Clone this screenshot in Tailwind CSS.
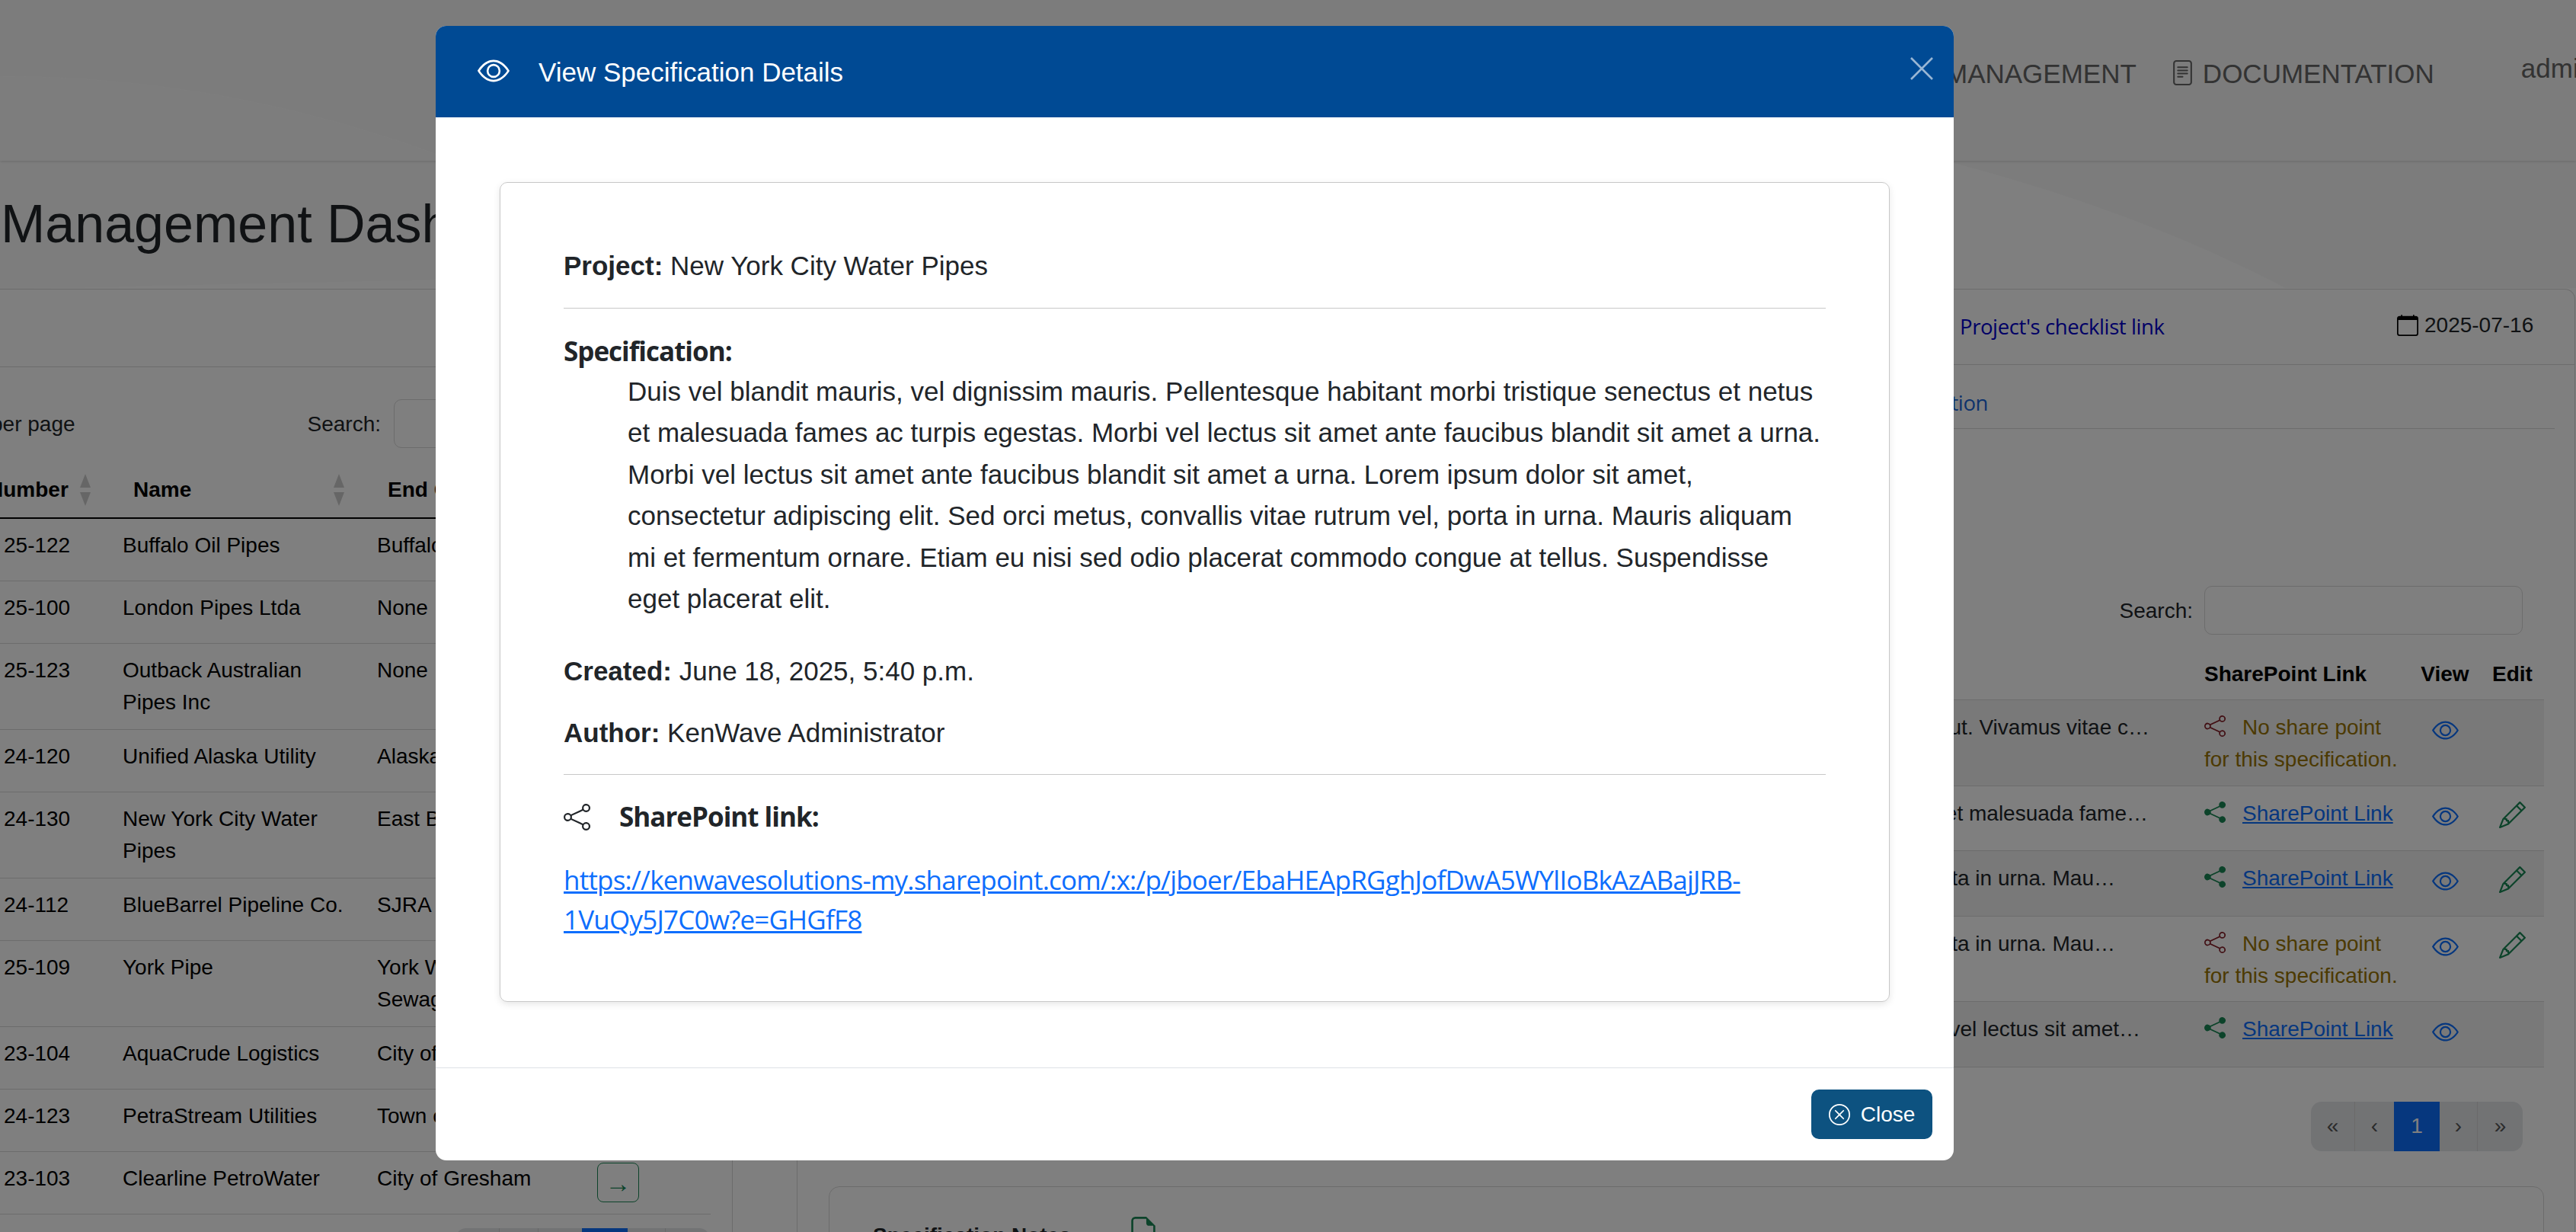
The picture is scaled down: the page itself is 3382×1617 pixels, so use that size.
<!DOCTYPE html>
<html lang="en">
<head>
    <meta charset="UTF-8">
    <title>View Specification Details</title>
    <script src="https://cdn.jsdelivr.net/npm/@tailwindcss/browser@4"></script>
</head>
<body class="relative w-[3382px] h-[1617px] overflow-hidden bg-white font-['Liberation_Sans',sans-serif] text-[28px] leading-[42px] text-black">
    <!-- icons -->
    <svg class="hidden">
        <symbol id="eye" viewBox="0 0 16 16"><path d="M16 8s-3-5.5-8-5.5S0 8 0 8s3 5.5 8 5.5S16 8 16 8zM1.173 8a13.133 13.133 0 0 1 1.66-2.043C4.12 4.668 5.88 3.5 8 3.5c2.12 0 3.879 1.168 5.168 2.457A13.133 13.133 0 0 1 14.828 8c-.058.087-.122.183-.195.288-.335.48-.83 1.12-1.465 1.755C11.879 11.332 10.119 12.5 8 12.5c-2.12 0-3.879-1.168-5.168-2.457A13.134 13.134 0 0 1 1.172 8z"/><path d="M8 5.5a2.5 2.5 0 1 0 0 5 2.5 2.5 0 0 0 0-5zM4.5 8a3.5 3.5 0 1 1 7 0 3.5 3.5 0 0 1-7 0z"/></symbol>
        <symbol id="share" viewBox="0 0 16 16"><path d="M13.5 1a1.5 1.5 0 1 0 0 3 1.5 1.5 0 0 0 0-3zM11 2.5a2.5 2.5 0 1 1 .603 1.628l-6.718 3.12a2.499 2.499 0 0 1 0 1.504l6.718 3.12a2.5 2.5 0 1 1-.488.876l-6.718-3.12a2.5 2.5 0 1 1 0-3.256l6.718-3.12A2.5 2.5 0 0 1 11 2.5zm-8.5 4a1.5 1.5 0 1 0 0 3 1.5 1.5 0 0 0 0-3zm11 5.5a1.5 1.5 0 1 0 0 3 1.5 1.5 0 0 0 0-3z"/></symbol>
        <symbol id="share-fill" viewBox="0 0 16 16"><path d="M11 2.5a2.5 2.5 0 1 1 .603 1.628l-6.718 3.12a2.499 2.499 0 0 1 0 1.504l6.718 3.12a2.5 2.5 0 1 1-.488.876l-6.718-3.12a2.5 2.5 0 1 1 0-3.256l6.718-3.12A2.5 2.5 0 0 1 11 2.5z"/></symbol>
        <symbol id="pencil" viewBox="0 0 16 16"><path d="M12.146.146a.5.5 0 0 1 .708 0l3 3a.5.5 0 0 1 0 .708l-10 10a.5.5 0 0 1-.168.11l-5 2a.5.5 0 0 1-.65-.65l2-5a.5.5 0 0 1 .11-.168l10-10zM11.207 2.5 13.5 4.793 14.793 3.5 12.5 1.207 11.207 2.5zm1.586 3L10.5 3.207 4 9.707V10h.5a.5.5 0 0 1 .5.5v.5h.5a.5.5 0 0 1 .5.5v.5h.293l6.5-6.5zm-9.761 5.175-.106.106-1.528 3.821 3.821-1.528.106-.106A.5.5 0 0 1 5 12.5V12h-.5a.5.5 0 0 1-.5-.5V11h-.5a.5.5 0 0 1-.468-.325z"/></symbol>
        <symbol id="sort" viewBox="0 0 14 42"><polygon points="7,0 14,18 0,18"/><polygon points="0,24 14,24 7,42"/></symbol>
    </svg>

    <!-- page background swooshes -->
    <svg class="absolute left-0 top-0" width="3382" height="400" viewBox="0 0 3382 400">
        <path d="M0 0H3382V378H3000C2850 300 2700 250 2565 214C1800 120 1200 100 900 360C600 180 300 100 0 100Z" fill="#000" fill-opacity="0.025"/>
        <path d="M0 100C300 100 600 180 900 360L0 380Z" fill="#000" fill-opacity="0.015"/>
    </svg>

    <div class="relative">
        <nav class="flex items-start h-[211px] pl-[2554px] pt-[76px] text-[35px] text-[#666] shadow-[0_1px_3px_rgba(0,0,0,0.15)]">
            <span class="shrink-0">MANAGEMENT</span>
            <svg class="shrink-0 ml-[44px] mt-[3px] w-[33px] h-[33px] fill-current" viewBox="0 0 16 16"><path d="M5 4a.5.5 0 0 0 0 1h6a.5.5 0 0 0 0-1H5zm-.5 2.5A.5.5 0 0 1 5 6h6a.5.5 0 0 1 0 1H5a.5.5 0 0 1-.5-.5zM5 8a.5.5 0 0 0 0 1h6a.5.5 0 0 0 0-1H5zm0 2a.5.5 0 0 0 0 1h3a.5.5 0 0 0 0-1H5z"/><path d="M2 2a2 2 0 0 1 2-2h8a2 2 0 0 1 2 2v12a2 2 0 0 1-2 2H4a2 2 0 0 1-2-2V2zm10-1H4a1 1 0 0 0-1 1v12a1 1 0 0 0 1 1h8a1 1 0 0 0 1-1V2a1 1 0 0 0-1-1z"/></svg>
            <span class="shrink-0 ml-[10px]">DOCUMENTATION</span>
            <span class="shrink-0 ml-[114px] -mt-[7px]">admin</span>
        </nav>

        <h1 class="flex items-center h-[168px] pb-[2px] pl-[1px] text-[70px] whitespace-nowrap text-[#212529]">Management Dashboard</h1>

        <div class="flex items-start">
            <!-- projects list -->
            <section class="w-[962px] h-[1300px] border-t border-r border-[#d8d8d8]">
                <div class="h-[102px] border-b border-[#d8d8d8]"></div>
                <div class="flex items-center mt-[42px] h-[64px] pt-[2px]">
                    <span class="-ml-[12px] text-[#212529]">per page</span>
                    <span class="ml-[305px] text-[#212529]">Search:</span>
                    <input class="ml-[17px] -mt-[2px] w-[300px] h-[64px] border border-[#d8d8d8] rounded-[10px]">
                </div>
                <table class="table-fixed w-[933px] mt-[18px] border-collapse">
                    <colgroup><col class="w-[147px]"><col class="w-[334px]"><col class="w-[289px]"><col class="w-[163px]"></colgroup>
                    <thead>
                        <tr class="h-[74px] border-b-2 border-black text-left align-middle">
                            <th class="font-bold"><div class="flex items-center -ml-[16px]">Number<svg class="ml-[15px] w-[14px] h-[42px] fill-black/20"><use href="#sort"/></svg></div></th>
                            <th class="font-bold pl-[28px]"><div class="flex items-center justify-between pr-[29px]">Name<svg class="w-[14px] h-[42px] fill-black/20"><use href="#sort"/></svg></div></th>
                            <th class="font-bold pl-[28px] whitespace-nowrap">End Customer</th>
                            <th></th>
                        </tr>
                    </thead>
                    <tbody class="[&_td]:align-top [&_td]:pt-[14px] [&_td]:pb-[14px] [&_td]:px-[14px] [&_tr]:h-[82px] [&_tr]:border-b [&_tr]:border-[#d8d8d8] [&_td:first-child]:pl-[5px]">
                        <tr><td>25-122</td><td>Buffalo Oil Pipes</td><td>Buffalo Water</td><td></td></tr>
                        <tr><td>25-100</td><td>London Pipes Ltda</td><td>None</td><td></td></tr>
                        <tr><td>25-123</td><td>Outback Australian Pipes Inc</td><td>None</td><td></td></tr>
                        <tr><td>24-120</td><td>Unified Alaska Utility</td><td>Alaska Utility</td><td></td></tr>
                        <tr><td>24-130</td><td>New York City Water Pipes</td><td>East Brunswick, NY</td><td></td></tr>
                        <tr><td>24-112</td><td>BlueBarrel Pipeline Co.</td><td>SJRA Water</td><td></td></tr>
                        <tr><td>25-109</td><td>York Pipe</td><td>York Water and Sewage</td><td></td></tr>
                        <tr><td>23-104</td><td>AquaCrude Logistics</td><td>City of Austin</td><td></td></tr>
                        <tr><td>24-123</td><td>PetraStream Utilities</td><td>Town of Cary</td><td></td></tr>
                        <tr>
                            <td>23-103</td><td>Clearline PetroWater</td><td class="whitespace-nowrap">City of Gresham</td>
                            <td class="!pt-[14px]"><button class="w-[55px] h-[52px] border border-[#198754] rounded-[8px] text-[#198754] text-[34px] leading-[52px]">→</button></td>
                        </tr>
                    </tbody>
                </table>
                <div class="flex ml-[598px] mt-[18px] w-[334px] h-[65px] rounded-[14px] overflow-hidden bg-[#e4e6e9] text-[#555]">
                    <span class="w-[58px] border-r border-[#d0d0d0]"></span><span class="w-[51px] border-r border-[#d0d0d0]"></span><span class="w-[57px]"></span>
                    <span class="w-[60px] bg-[#0d6efd]"></span><span class="w-[50px] border-r border-[#d0d0d0]"></span><span class="w-[58px]"></span>
                </div>
            </section>

            <!-- checklist and specifications -->
            <section class="ml-[84px] w-[2335px] h-[1300px] border-t border-l border-r border-[#d8d8d8] rounded-tr-[14px]">
                <div class="flex items-center h-[99px] border-b border-[#d8d8d8] pl-[1526px]">
                    <a class="w-[267px] whitespace-nowrap font-['Open_Sans',sans-serif] text-[27.5px] text-[#0000cc] tracking-[-0.4px]">Project's checklist link</a>
                    <svg class="ml-[307px] -mt-[4px] w-[28px] h-[28px] fill-current" viewBox="0 0 16 16"><path d="M3.5 0a.5.5 0 0 1 .5.5V1h8V.5a.5.5 0 0 1 1 0V1h1a2 2 0 0 1 2 2v11a2 2 0 0 1-2 2H2a2 2 0 0 1-2-2V3a2 2 0 0 1 2-2h1V.5a.5.5 0 0 1 .5-.5zM1 4v10a1 1 0 0 0 1 1h12a1 1 0 0 0 1-1V4H1z"/></svg>
                    <span class="ml-[8px] -mt-[4px] text-[#212529]">2025-07-16</span>
                </div>
                <div class="flex items-center justify-end h-[84px] w-[2307px] border-b border-[#d8d8d8] pr-[744px] pt-[16px]">
                    <a class="font-['Open_Sans',sans-serif] text-[27.5px] text-[#1a66d8] tracking-[-0.4px]">Specification</a>
                </div>

                <div class="flex items-center justify-end h-[64px] mt-[206px] w-[2265px]">
                    <span class="mr-[15px] mt-[2px] text-[#212529]">Search:</span>
                    <input class="w-[418px] h-[64px] border border-[#d8d8d8] rounded-[10px]">
                </div>

                <table class="table-fixed w-[2252px] ml-[41px] mt-[20px] border-collapse">
                    <colgroup><col class="w-[1792px]"><col class="w-[289px]"><col class="w-[82px]"><col class="w-[89px]"></colgroup>
                    <thead>
                        <tr class="h-[65px] border-b border-[#d8d8d8] font-bold text-left">
                            <th class="text-right pr-[58px]"></th>
                            <th class="pl-[14px]">SharePoint Link</th>
                            <th class="text-center">View</th>
                            <th class="text-center pl-[6px]">Edit</th>
                        </tr>
                    </thead>
                    <tbody class="[&_td]:align-top [&_td]:pt-[15px] [&_tr]:border-b [&_tr]:border-[#d8d8d8] [&_tr:nth-child(odd)]:bg-black/5 text-[#212529]">
                        <tr class="h-[113px]">
                            <td class="text-right pr-[58px] whitespace-nowrap">sodales ut. Vivamus vitae c…</td>
                            <td class="pl-[14px] text-[#997404]"><svg class="inline-block align-[-3px] mr-[22px] w-[28px] h-[28px] fill-[#842029]"><use href="#share"/></svg>No share point<br>for this specification.</td>
                            <td class="text-center"><svg class="inline-block w-[35px] h-[35px] mt-[5px] fill-[#0d6efd]"><use href="#eye"/></svg></td>
                            <td></td>
                        </tr>
                        <tr class="h-[85px]">
                            <td class="text-right pr-[60px] whitespace-nowrap">netus et malesuada fame…</td>
                            <td class="pl-[14px]"><svg class="inline-block align-[-3px] mr-[22px] w-[28px] h-[28px] fill-[#198754]"><use href="#share-fill"/></svg><a class="text-[#0d6efd] underline">SharePoint Link</a></td>
                            <td class="text-center"><svg class="inline-block w-[35px] h-[35px] mt-[5px] fill-[#0d6efd]"><use href="#eye"/></svg></td>
                            <td class="text-center pl-[6px]"><svg class="inline-block w-[35px] h-[35px] mt-[1px] fill-[#198754]"><use href="#pencil"/></svg></td>
                        </tr>
                        <tr class="h-[86px]">
                            <td class="text-right pr-[103px] whitespace-nowrap">porta in urna. Mau…</td>
                            <td class="pl-[14px]"><svg class="inline-block align-[-3px] mr-[22px] w-[28px] h-[28px] fill-[#198754]"><use href="#share-fill"/></svg><a class="text-[#0d6efd] underline">SharePoint Link</a></td>
                            <td class="text-center"><svg class="inline-block w-[35px] h-[35px] mt-[5px] fill-[#0d6efd]"><use href="#eye"/></svg></td>
                            <td class="text-center pl-[6px]"><svg class="inline-block w-[35px] h-[35px] mt-[1px] fill-[#198754]"><use href="#pencil"/></svg></td>
                        </tr>
                        <tr class="h-[112px]">
                            <td class="text-right pr-[103px] whitespace-nowrap">porta in urna. Mau…</td>
                            <td class="pl-[14px] text-[#997404]"><svg class="inline-block align-[-3px] mr-[22px] w-[28px] h-[28px] fill-[#842029]"><use href="#share"/></svg>No share point<br>for this specification.</td>
                            <td class="text-center"><svg class="inline-block w-[35px] h-[35px] mt-[5px] fill-[#0d6efd]"><use href="#eye"/></svg></td>
                            <td class="text-center pl-[6px]"><svg class="inline-block w-[35px] h-[35px] mt-[1px] fill-[#198754]"><use href="#pencil"/></svg></td>
                        </tr>
                        <tr class="h-[86px]">
                            <td class="text-right pr-[70px] whitespace-nowrap">Morbi vel lectus sit amet…</td>
                            <td class="pl-[14px]"><svg class="inline-block align-[-3px] mr-[22px] w-[28px] h-[28px] fill-[#198754]"><use href="#share-fill"/></svg><a class="text-[#0d6efd] underline">SharePoint Link</a></td>
                            <td class="text-center"><svg class="inline-block w-[35px] h-[35px] mt-[5px] fill-[#0d6efd]"><use href="#eye"/></svg></td>
                            <td></td>
                        </tr>
                    </tbody>
                </table>

                <div class="flex items-center justify-center ml-[1987px] mt-[45px] w-[278px] h-[65px] rounded-[14px] overflow-hidden bg-[#e4e6e9] text-[#555] [&>span]:flex [&>span]:items-center [&>span]:justify-center">
                    <span class="w-[58px] h-full border-r border-[#d4d4d4]">«</span>
                    <span class="w-[51px] h-full">‹</span>
                    <span class="w-[60px] h-full bg-[#0d6efd] text-white">1</span>
                    <span class="w-[50px] h-full border-r border-[#d4d4d4]">›</span>
                    <span class="w-[59px] h-full">»</span>
                </div>

                <div class="ml-[41px] mt-[46px] w-[2252px] h-[200px] border border-[#d8d8d8] rounded-[14px] pl-[57px] pt-[39px] flex items-start">
                    <span class="mt-[4px] font-bold text-[#212529]">Specification Notes</span>
                    <svg class="ml-[78px] w-[34px] h-[42px] fill-[#198754]" viewBox="2 0 12 16"><path d="M14 4.5V14a2 2 0 0 1-2 2H4a2 2 0 0 1-2-2V2a2 2 0 0 1 2-2h5.5L14 4.5zm-3 0A1.5 1.5 0 0 1 9.5 3V1H4a1 1 0 0 0-1 1v12a1 1 0 0 0 1 1h8a1 1 0 0 0 1-1V4.5h-2z"/></svg>
                </div>
            </section>
        </div>
    </div>

    <!-- modal -->
    <div class="absolute inset-0 bg-black/50"></div>
    <div class="absolute left-[572px] top-[34px] flex flex-col w-[1993px] h-[1489px] rounded-[14px] overflow-hidden bg-white text-[#212529]">
        <header class="flex items-center shrink-0 h-[120px] pl-[55px] pr-[27px] bg-[#004a94] text-white">
            <svg class="w-[42px] h-[42px] -mt-[3px] fill-white"><use href="#eye"/></svg>
            <h5 class="ml-[38px] mt-[2px] text-[35px]">View Specification Details</h5>
            <svg class="ml-auto -mt-[8px] w-[30px] h-[30px] stroke-white/60" viewBox="0 0 30 30" stroke-width="2.6"><path d="M1 1 29 29M29 1 1 29"/></svg>
        </header>
        <div class="flex-1 pt-[85px] px-[84px]">
            <div class="h-[1076px] border border-[#c8c8c8] rounded-[10px] shadow-[0_3px_10px_rgba(0,0,0,0.1)] px-[83px] pt-[82px] text-[35px] leading-[54px]">
                <p><b class="font-bold">Project:</b> New York City Water Pipes</p>
                <hr class="mt-[28px] mb-[29px] border-[#c8c8c8]">
                <b class="block font-['Open_Sans',sans-serif] font-bold tracking-[-1px]">Specification:</b>
                <p class="-mt-[1px] pl-[84px] leading-[54.4px]">Duis vel blandit mauris, vel dignissim mauris. Pellentesque habitant morbi tristique senectus et netus et malesuada fames ac turpis egestas. Morbi vel lectus sit amet ante faucibus blandit sit amet a urna. Morbi vel lectus sit amet ante faucibus blandit sit amet a urna. Lorem ipsum dolor sit amet, consectetur adipiscing elit. Sed orci metus, convallis vitae rutrum vel, porta in urna. Mauris aliquam mi et fermentum ornare. Etiam eu nisi sed odio placerat commodo congue at tellus. Suspendisse eget placerat elit.</p>
                <p class="mt-[41px]"><b class="font-bold">Created:</b> June 18, 2025, 5:40 p.m.</p>
                <p class="mt-[27px]"><b class="font-bold">Author:</b> KenWave Administrator</p>
                <hr class="mt-[27px] mb-[28px] border-[#c8c8c8]">
                <div class="flex items-center">
                    <svg class="w-[35px] h-[35px] fill-[#212529]"><use href="#share"/></svg>
                    <b class="ml-[38px] font-['Open_Sans',sans-serif] font-bold tracking-[-1px]">SharePoint link:</b>
                </div>
                <a class="block mt-[30px] font-['Open_Sans',sans-serif] text-[35px] leading-[52px] tracking-[-0.78px] text-[#0d6efd] underline">https://kenwavesolutions-my.sharepoint.com/:x:/p/jboer/EbaHEApRGghJofDwA5WYlIoBkAzABajJRB-1VuQy5J7C0w?e=GHGfF8</a>
            </div>
        </div>
        <footer class="flex justify-end shrink-0 h-[122px] pt-[28px] pr-[28px] border-t border-[#dee2e6]">
            <button class="flex items-center justify-center gap-[14px] w-[159px] h-[65px] rounded-[10px] bg-[#0d5280] text-white">
                <svg class="w-[28px] h-[28px] fill-white" viewBox="0 0 16 16"><path d="M8 15A7 7 0 1 1 8 1a7 7 0 0 1 0 14zm0 1A8 8 0 1 0 8 0a8 8 0 0 0 0 16z"/><path d="M4.646 4.646a.5.5 0 0 1 .708 0L8 7.293l2.646-2.647a.5.5 0 0 1 .708.708L8.707 8l2.647 2.646a.5.5 0 0 1-.708.708L8 8.707l-2.646 2.647a.5.5 0 0 1-.708-.708L7.293 8 4.646 5.354a.5.5 0 0 1 0-.708z"/></svg>
                Close
            </button>
        </footer>
    </div>
</body>
</html>
